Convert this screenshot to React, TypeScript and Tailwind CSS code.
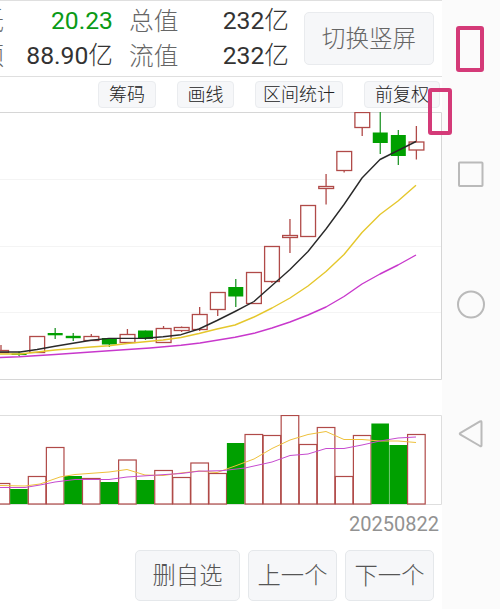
type Candle = {
  up: boolean;
  top: number;
  bottom: number;
  high: number;
  low: number;
  volume: number;
};

const candles: Candle[] = [
  { up: true, top: 350.5, bottom: 352.5, high: 345, low: 353, volume: 483.5 },
  { up: false, top: 353.5, bottom: 355, high: 351.5, low: 356, volume: 489 },
  { up: true, top: 336.5, bottom: 352.5, high: 336.5, low: 352.5, volume: 476.5 },
  { up: false, top: 333, bottom: 335.3, high: 328, low: 339, volume: 447.5 },
  { up: false, top: 335.8, bottom: 338.2, high: 333, low: 341, volume: 476 },
  { up: true, top: 336.5, bottom: 340.5, high: 334, low: 340.5, volume: 478.5 },
  { up: false, top: 338, bottom: 344.5, high: 338, low: 347, volume: 482 },
  { up: true, top: 334.5, bottom: 342.5, high: 329, low: 343, volume: 460 },
  { up: false, top: 330.5, bottom: 339, high: 330.5, low: 340, volume: 480 },
  { up: true, top: 328.5, bottom: 342.5, high: 326, low: 342.5, volume: 470.5 },
  { up: true, top: 327.5, bottom: 330.5, high: 326.5, low: 332, volume: 477.5 },
  { up: true, top: 314.5, bottom: 329.5, high: 307, low: 331, volume: 463 },
  { up: true, top: 292.5, bottom: 309.5, high: 292.5, low: 316, volume: 473.5 },
  { up: false, top: 287, bottom: 296.5, high: 279, low: 307, volume: 443 },
  { up: true, top: 272.5, bottom: 303.5, high: 272.5, low: 303.5, volume: 434.5 },
  { up: true, top: 246.5, bottom: 281.5, high: 246.5, low: 283, volume: 435.5 },
  { up: true, top: 235.5, bottom: 237.5, high: 219, low: 253, volume: 415.5 },
  { up: true, top: 205.5, bottom: 236.5, high: 205.5, low: 236.5, volume: 444.5 },
  { up: true, top: 186.5, bottom: 188.5, high: 174, low: 204.5, volume: 427.5 },
  { up: true, top: 151.5, bottom: 170.5, high: 151.5, low: 172.5, volume: 476.5 },
  { up: true, top: 112.5, bottom: 127.5, high: 112.5, low: 136, volume: 435.5 },
  { up: false, top: 132.5, bottom: 143, high: 112, low: 154, volume: 423.5 },
  { up: false, top: 135, bottom: 156, high: 130, low: 165, volume: 445 },
  { up: true, top: 142, bottom: 150, high: 126, low: 159.5, volume: 434.5 },
];

const centerOf = (index: number) => 1 + index * 18.06;
// the fourth day has a green candle but a hollow volume bar
const hollowVolume = (candle: Candle, index: number) => candle.up || index === 3;

function PriceChart() {
  return (
    <svg className="block h-[268px] w-[442px]" viewBox="0 112 442 268" fill="none">
      <path d="M0 179.5H441M0 246.5H441M0 312.5H441" stroke="#f4f4f4" />
      <path d="M0 112.5H441.5V379.5H0" stroke="#d6d6d6" />
      {candles.map((c, i) => {
        const x = centerOf(i);
        return c.up ? (
          <g key={i} stroke="#b04a48" strokeWidth="1.3">
            <path d={`M${x} ${c.high}V${c.top}M${x} ${c.bottom}V${c.low}`} />
            <rect x={x - 7.3} y={c.top} width="14.8" height={c.bottom - c.top} />
          </g>
        ) : (
          <g key={i}>
            <path d={`M${x} ${c.high}V${c.low}`} stroke="#22962a" strokeWidth="1.3" />
            <rect x={x - 7.5} y={c.top} width="15" height={c.bottom - c.top} fill="#00a000" />
          </g>
        );
      })}
      <g strokeWidth="1.4" strokeLinejoin="round">
        <polyline
          stroke="#c838cc"
          points="0,357.5 19,356.8 55,354.5 109,350.7 150,348 181,345.3 200,343 235,337.3 254,333.3 272,328 290,322 308,315 326,307 344,296.5 362,284 380,274 398,265 416,255"
        />
        <polyline
          stroke="#e5c72c"
          points="0,354 20,354 55,350 91,347 109,345.8 127,343.5 145,341.8 163,340 181,337.5 199,333.5 217,329 235,325 254,317 272,308 290,298 308,286 326,271.5 344,254.5 362,232.5 380,214.5 398,201 416,185.3"
        />
        <polyline
          stroke="#292929"
          points="0,352 20,352 37,349.5 55,346.3 73,343.3 91,340.3 109,338.4 145,338.2 163,336.7 181,334.7 199,329 217,320.5 235,311.5 254,301.5 272,285.5 290,269.5 308,251.5 326,229 344,204.5 362,178 380,159.5 398,150.5 416,141.5"
        />
      </g>
    </svg>
  );
}

function VolumeChart() {
  return (
    <svg className="block h-[90px] w-[442px]" viewBox="0 415 442 90" fill="none">
      <path d="M0 415.5H441.5V504.5H0" stroke="#dedede" />
      {candles.map((c, i) => {
        const x = centerOf(i);
        return hollowVolume(c, i) ? (
          <rect key={i} x={x - 8.8} y={c.volume} width="17.6" height={504 - c.volume} stroke="#b04a48" strokeWidth="1.2" />
        ) : (
          <rect key={i} x={x - 8.9} y={c.volume} width="17.6" height={504 - c.volume} fill="#00a000" />
        );
      })}
      <polyline
        stroke="#eec13c"
        points="0,485.5 25,486 40,484 60,477 75,474.5 109,472 127,469.5 145,475 163,475.5 181,473 199,471 217,472.5 235,466 254,459 272,448.5 290,440 308,434.5 326,431.5 344,439.5 362,439.5 380,441 398,441 416,442.5"
      />
      <polyline
        stroke="#c64bcf"
        points="0,487.5 25,487.5 40,485 55,482 75,479.5 109,479.5 127,477 150,475.5 181,473.5 199,471.2 222,470.7 245,468 272,462 290,455.5 308,454 326,448.5 344,448.5 362,445 380,441 398,438 416,437"
      />
    </svg>
  );
}

function ToolButton({ label, className }: { label: string; className: string }) {
  return (
    <button
      type="button"
      className={`h-[27px] shrink-0 rounded border border-[#eaecef] bg-[#f6f7f9] pt-px text-[18px] leading-6 font-light whitespace-nowrap text-[#222] ${className}`}
    >
      {label}
    </button>
  );
}

function PagerButton({ label, className }: { label: string; className: string }) {
  return (
    <button
      type="button"
      className={`h-[51px] rounded-[5px] border border-[#e5e8eb] bg-[#f6f7f9] pt-[3px] text-[23.3px] leading-none font-light whitespace-nowrap text-[#555] ${className}`}
    >
      {label}
    </button>
  );
}

type QuoteProps = {
  label: string;
  value: string;
  unit?: string;
  capLabel: string;
  cap: string;
  valueColor?: string;
};

function QuoteRow({ label, value, unit, capLabel, cap, valueColor = "" }: QuoteProps) {
  return (
    <div className="flex h-[35px] items-center text-[24.7px] leading-[35px] whitespace-nowrap text-[#333]">
      <span className="flex w-1 shrink-0 justify-end pt-px font-light text-[#666]">{label}</span>
      <span className={`w-[109px] text-right ${valueColor}`}>
        {value}
        {unit && <span className="font-light">{unit}</span>}
      </span>
      <span className="ml-4 w-[50px] pt-px font-light text-[#666]">{capLabel}</span>
      <span className="w-[110px] text-right">
        {cap}
        <span className="font-light">亿</span>
      </span>
    </div>
  );
}

export default function App() {
  return (
    <div className="relative flex h-[609px] w-[500px] overflow-hidden bg-white font-[Roboto,'Noto_Sans_CJK_SC',sans-serif]">
      <main className="w-[442px] shrink-0 overflow-hidden">
        <header className="flex h-[77px] border-t border-b border-[#dfdfdf]">
          <div className="w-[304px] shrink-0 overflow-hidden pt-0.5">
            <QuoteRow label="低" value="20.23" capLabel="总值" cap="232" valueColor="text-[#0a9a16]" />
            <QuoteRow label="额" value="88.90" unit="亿" capLabel="流值" cap="232" />
          </div>
          <button
            type="button"
            className="mt-[11px] h-[53px] w-[130px] rounded-[5px] border border-[#e9ebee] bg-[#f6f7f9] pt-[3px] text-[23.6px] leading-none font-light text-[#666]"
          >
            切换竖屏
          </button>
        </header>

        <div className="flex h-[35px] pt-1 pl-[98px]">
          <ToolButton label="筹码" className="w-[58px]" />
          <ToolButton label="画线" className="ml-[21px] w-[57px]" />
          <ToolButton label="区间统计" className="ml-[21px] w-[88px]" />
          <ToolButton label="前复权" className="ml-[21px] w-[76px] pl-[10px] text-left" />
        </div>

        <PriceChart />
        <div className="mt-[35px]">
          <VolumeChart />
        </div>

        <p className="mt-1.5 h-[27px] pr-[3px] text-right text-[20px] leading-[26px] text-[#929292]">20250822</p>
        <div className="mt-3 flex gap-2 pl-[135px]">
          <PagerButton label="删自选" className="w-[105px]" />
          <PagerButton label="上一个" className="w-[89px]" />
          <PagerButton label="下一个" className="w-[89px]" />
        </div>
      </main>

      <nav className="flex w-[58px] flex-col items-center bg-[#fbfbfb] pt-[160px]">
        <svg className="h-7 w-[30px]" viewBox="0 0 30 28" fill="none" stroke="#bababa" strokeWidth="2" strokeLinejoin="round">
          <rect x="3" y="2.5" width="23.5" height="23.5" rx="0.7" />
        </svg>
        <svg className="mt-[101px] h-[30px] w-[30px]" viewBox="0 0 30 30" fill="none" stroke="#bababa" strokeWidth="2">
          <circle cx="15" cy="15.5" r="13" />
        </svg>
        <svg className="mt-[99px] h-[32px] w-[30px]" viewBox="0 0 30 32" fill="none" stroke="#bababa" strokeWidth="2" strokeLinejoin="round">
          <path d="M4.5 14.8Q3 15.7 4.5 16.6L24 28Q25.5 28.8 25.5 27.2V4.2Q25.5 2.6 24 3.4Z" />
        </svg>
      </nav>

      <div className="absolute top-[26px] left-[456px] h-[46px] w-[28px] rounded-[3px] border-4 border-[#d43a78]" />
      <div className="absolute top-[88px] left-[428px] h-[47px] w-[24px] rounded-[3px] border-4 border-[#d43a78]" />
    </div>
  );
}
